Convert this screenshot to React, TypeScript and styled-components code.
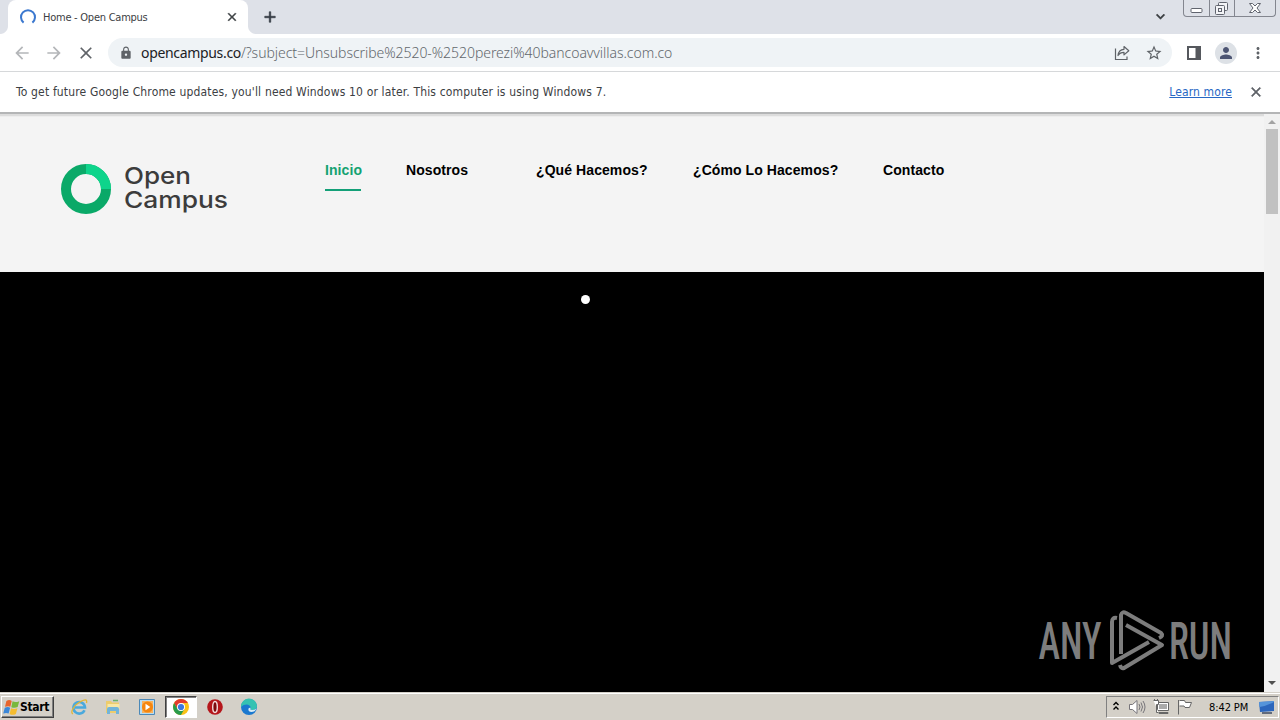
import React from "react";
import styled, { createGlobalStyle, css } from "styled-components";
import {
  MdAdd,
  MdArrowBack,
  MdArrowForward,
  MdClose,
  MdKeyboardArrowDown,
  MdLock,
  MdMoreVert,
  MdPerson,
  MdStarBorder,
} from "react-icons/md";

const GlobalStyle = createGlobalStyle`
  * {
    box-sizing: border-box;
  }
  body {
    margin: 0;
    overflow: hidden;
    font-family: "DejaVu Sans Condensed", "DejaVu Sans", sans-serif;
    font-stretch: condensed;
  }
  svg {
    display: block;
    flex: none;
  }
`;

const Screen = styled.div`
  width: 1280px;
  height: 720px;
  display: flex;
  flex-direction: column;
  background: #fff;
`;

const TabStrip = styled.div`
  height: 34px;
  flex: none;
  display: flex;
  background: #dee1e8;
`;

const TabCorner = styled.div<{ $side: "left" | "right" }>`
  width: 8px;
  background: ${(p) =>
    p.$side === "left"
      ? "radial-gradient(circle at 0 26px, #dee1e8 7.5px, #fff 8.5px) 0 0 no-repeat"
      : "radial-gradient(circle at 8px 26px, #dee1e8 7.5px, #fff 8.5px) 0 0 no-repeat"};
  clip-path: inset(26px 0 0 0);
`;

const Tab = styled.div`
  width: 240px;
  height: 34px;
  display: flex;
  align-items: center;
  padding: 0 9px 0 11px;
  background: #fff;
  border-radius: 8px 8px 0 0;
  color: #3c4043;
`;

const TabTitle = styled.span`
  flex: 1;
  margin-left: 6px;
  font-size: 11px;
  letter-spacing: -0.25px;
  white-space: nowrap;
`;

const NewTab = styled.div`
  margin: 8px 0 0 5px;
  color: #333941;
`;

const TabSearch = styled.div`
  margin: 8px 14px 0 auto;
  color: #3c4043;
`;

// the md icons carry an empty bounding path, keep the stroke off it
const boldIcon = css`
  path:not([fill="none"]) {
    stroke: currentColor;
    stroke-width: 0.8px;
  }
  path[fill="none"] {
    stroke: none;
  }
`;

const BoldClose = styled(MdClose)`
  ${boldIcon}
`;

const BoldAdd = styled(MdAdd)`
  ${boldIcon}
`;

const BoldArrowDown = styled(MdKeyboardArrowDown)`
  ${boldIcon}
`;

const WindowButtons = styled.div`
  display: flex;
  width: 93px;
  height: 17px;
  margin-right: 4px;
  border: 1px solid #83868f;
  border-top: 0;
  border-radius: 0 0 4px 4px;
`;

const WindowButton = styled.div<{ $width: number }>`
  width: ${(p) => p.$width}px;
  display: flex;
  justify-content: center;
  & + & {
    border-left: 1px solid #83868f;
  }
`;

const Toolbar = styled.div`
  height: 38px;
  flex: none;
  display: flex;
  align-items: center;
  padding-left: 12px;
  border-bottom: 1px solid #d6d8da;
  color: #5f6368;
`;

const NavButton = styled.div<{ $disabled?: boolean }>`
  width: 32px;
  color: ${(p) => (p.$disabled ? "#b4b6b9" : "#5f6368")};
`;

const AddressBar = styled.div`
  width: 1064px;
  height: 29px;
  padding: 0 9px 0 11px;
  display: flex;
  align-items: center;
  border-radius: 15px;
  background: #eff3f6;
`;

const Url = styled.div`
  flex: 1;
  margin-left: 8px;
  font-family: "Noto Sans", sans-serif;
  font-weight: 300;
  font-size: 14px;
  letter-spacing: -0.05px;
  white-space: nowrap;
  color: #62676c;
  b {
    font-weight: 400;
    letter-spacing: -0.33px;
    color: #202124;
  }
`;

const StarIcon = styled(MdStarBorder)`
  margin-left: 14px;
`;

const ToolbarActions = styled.div`
  display: flex;
  align-items: center;
  margin-left: 14px;
`;

const Avatar = styled.div`
  width: 22px;
  height: 22px;
  margin: 0 12px 0 13px;
  display: flex;
  align-items: center;
  justify-content: center;
  border-radius: 50%;
  background: #dde1e6;
  color: #4d5573;
`;

const InfoBar = styled.div`
  height: 40px;
  flex: none;
  display: flex;
  align-items: center;
  padding: 0 16px;
  font-size: 12px;
  color: #3c4043;
`;

const InfoText = styled.span`
  flex: 1;
  letter-spacing: 0.163px;
  white-space: nowrap;
`;

const LearnMore = styled.a`
  margin-right: 16px;
  letter-spacing: 0.12px;
  color: #2767c4;
  text-decoration: underline;
`;

const Viewport = styled.div`
  flex: 1;
  min-height: 0;
  display: flex;
  border-top: 2px solid #b4b5b6;
`;

const Page = styled.div`
  flex: 1;
  display: flex;
  flex-direction: column;
`;

const Header = styled.header`
  height: 158px;
  flex: none;
  display: flex;
  background: linear-gradient(#dcdcdc 0 2px, #ededed 2px 3px, #f4f4f4 3px);
`;

const Brand = styled.div`
  width: 325px;
  padding: 48px 0 0 60px;
`;

const Menu = styled.nav`
  display: flex;
  padding-top: 46px;
`;

const MenuItem = styled.a<{ $width: number; $gap?: number; $active?: boolean }>`
  width: ${(p) => p.$width}px;
  height: 31px;
  margin-right: ${(p) => p.$gap ?? 45}px;
  font: bold 14px/20px "Liberation Sans", Arial, sans-serif;
  letter-spacing: 0.08px;
  white-space: nowrap;
  color: #000;
  ${(p) =>
    p.$active &&
    css`
      color: #14a271;
      border-bottom: 2px solid #14a078;
    `}
`;

const Hero = styled.main`
  position: relative;
  flex: 1;
  background: #000;
`;

const LoaderDot = styled.div`
  position: absolute;
  left: 581px;
  top: 23px;
  width: 9px;
  height: 9px;
  border-radius: 50%;
  background: #fff;
`;

const Watermark = styled.div`
  position: absolute;
  right: 26px;
  bottom: 18px;
`;

const Scrollbar = styled.div`
  width: 16px;
  display: flex;
  flex-direction: column;
  align-items: center;
  padding: 5px 0 6px;
  background: #f1f1f1;
`;

const ScrollThumb = styled.div`
  width: 12px;
  height: 85px;
  margin: 5px 0 auto;
  background: #c1c1c1;
`;

const Taskbar = styled.footer`
  height: 28px;
  flex: none;
  display: flex;
  align-items: center;
  padding: 1px 0 0;
  background: #d4d0c8;
  border-top: 1px solid #d4d0c8;
  box-shadow: inset 0 1px #fff;
`;

const StartButton = styled.div`
  width: 53px;
  height: 22px;
  margin: 0 9px 0 1px;
  padding-left: 1px;
  display: flex;
  align-items: center;
  border: 1px solid;
  border-color: #fff #404040 #404040 #fff;
  box-shadow: inset -1px -1px #808080;
  font: bold 12px "DejaVu Sans Condensed", "DejaVu Sans", sans-serif;
  letter-spacing: -0.35px;
  color: #000;
`;

const TaskItem = styled.div<{ $active?: boolean }>`
  width: 32px;
  height: 22px;
  margin-right: 2px;
  display: flex;
  align-items: center;
  justify-content: center;
  border: 1px solid transparent;
  ${(p) =>
    p.$active &&
    css`
      border-color: #404040 #fff #fff #404040;
      background: #fff;
      box-shadow: inset 1px 1px #808080;
    `}
`;

const Tray = styled.div`
  width: 173px;
  height: 22px;
  margin: 0 1px 0 auto;
  padding: 0 2px 0 5px;
  display: flex;
  align-items: center;
  border: 1px solid;
  border-color: #808080 #fff #fff #808080;
`;

const TrayIcons = styled.div`
  display: flex;
  align-items: center;
  gap: 6px;
  margin-left: 8px;
`;

const Clock = styled.span`
  margin: 0 11px 0 15px;
  font-size: 11px;
  letter-spacing: -0.1px;
  white-space: nowrap;
  color: #000;
`;

const Spinner = () => (
  <svg width="18" height="18" viewBox="0 0 18 18" fill="none">
    <path d="M4.6 14.6A7 7 0 1 1 13.4 14.6" stroke="#3b78cf" strokeWidth="2" />
  </svg>
);

const ShareIcon = () => (
  <svg width="18" height="18" viewBox="0 0 18 18" fill="none" stroke="#5f6368" strokeWidth="1.2">
    <path d="M2.500 4.500v11h11.500v-3" />
    <path d="M5 11.500c.4-3.800 2.500-6 6-6.200V2.500l4.800 4.200-4.800 4.200V8.300c-2.800 0-4.700 1-6 3.200z" strokeLinejoin="round" />
  </svg>
);

const SidePanelIcon = () => (
  <svg width="16" height="16" viewBox="0 0 16 16">
    <path fill="#55585d" fillRule="evenodd" d="M1 1h14v14H1zM3 3v10h6.500V3z" />
  </svg>
);

const MinimizeIcon = () => (
  <svg width="14" height="16" viewBox="0 0 14 16">
    <rect x="1" y="8.500" width="11" height="4" rx="1" fill="#fff" stroke="#60646e" />
  </svg>
);

const RestoreIcon = () => (
  <svg width="16" height="16" viewBox="0 0 16 16" fill="#f3f4f7" stroke="#60646e">
    <rect x="4.500" y="2.500" width="9" height="8" rx="1" />
    <rect x="1.500" y="5.500" width="9" height="9" rx="1" />
    <rect x="4.500" y="8.500" width="3" height="3" />
  </svg>
);

const CloseWindowIcon = () => (
  <svg width="14" height="16" viewBox="0 0 14 16">
    <path
      d="M1.500 3.500h3L7 6l2.500-2.500h3L9 8l3.500 4.500h-3L7 10l-2.500 2.500h-3L5 8z"
      fill="#fff"
      stroke="#60646e"
    />
  </svg>
);

const BrandLogo = () => (
  <svg width="170" height="54" viewBox="0 0 170 54">
    <circle cx="26" cy="27" r="20" fill="none" stroke="#0aa968" strokeWidth="10" />
    <path d="M26 7a20 20 0 0 1 20 20" fill="none" stroke="#0ed48b" strokeWidth="10" />
    <g fill="#3c3c3c" fontFamily="Inter, sans-serif" fontWeight="500" fontSize="23.5">
      <text x="64" y="22" textLength="67" lengthAdjust="spacingAndGlyphs">
        Open
      </text>
      <text x="64" y="46" textLength="104" lengthAdjust="spacingAndGlyphs">
        Campus
      </text>
    </g>
  </svg>
);

const AnyRunMark = () => (
  <svg width="200" height="66" viewBox="0 0 200 66">
    <g fill="#7d7d7d" fontFamily="Roboto, sans-serif" fontWeight="500" fontSize="51">
      <text transform="translate(0.5 51) scale(0.643 1)" textLength="98" lengthAdjust="spacingAndGlyphs">
        ANY
      </text>
      <text transform="translate(131 51) scale(0.643 1)" textLength="98" lengthAdjust="spacingAndGlyphs">
        RUN
      </text>
    </g>
    <g fill="none" stroke="#7d7d7d" strokeWidth="4" strokeLinejoin="round">
      <path d="M79 10q-5-1-5 4v41l37-21" />
      <path d="M83 46V7q1-4 5-2l35 20q3 3-2 5" />
      <path d="M88 17l36 20-38 23q-3 1-4-3" />
    </g>
  </svg>
);

const StartIcon = () => (
  <svg width="17" height="17" viewBox="0 0 16 16">
    <path d="M3.200 1.800Q6 .3 8.200 1.800L6.900 7.200Q5 6.200 1.900 7.400z" fill="#e8642c" />
    <path d="M9 2.200Q11.800 3.700 15.300 2L13.800 7.600Q10.800 9 7.800 7.700z" fill="#79b83c" />
    <path d="M1.700 8.200Q4.700 7 6.700 8.200L5.300 13.600Q3 12.500 .2 13.700z" fill="#3b87d8" />
    <path d="M7.600 8.600Q10.300 10 13.600 8.600L12.100 14Q9 15.600 6.200 14z" fill="#f5bc2e" />
  </svg>
);

const IeIcon = () => (
  <svg width="18" height="18" viewBox="0 0 18 18" fill="none">
    <path d="M14.500 12.200A5.800 5.800 0 1 1 15 9.500H5" stroke="#4aa9dd" strokeWidth="2.600" />
    <path d="M3 16C0 15 3 8 9 4.500S17.500 1 16.500 5" stroke="#e3b634" strokeWidth="1.300" />
  </svg>
);

const ExplorerIcon = () => (
  <svg width="18" height="18" viewBox="0 0 18 18">
    <path d="M2 3h5l1 1.500h7V15H2z" fill="#edcc6c" />
    <path d="M3.500 6h12v5h-12z" fill="#f8e7a5" />
    <path d="M3 16v-5q0-2 2-2h8q2 0 2 2v5h-3v-3H6v3z" fill="#72b4d9" />
    <path d="M9 2.500h5" stroke="#6bb36b" strokeWidth="1.500" />
  </svg>
);

const MediaIcon = () => (
  <svg width="18" height="18" viewBox="0 0 18 18">
    <path d="M1.500 1.500h15v15h-15z" fill="#b9dcf1" stroke="#4c89b8" />
    <path d="M4 3h11v12H4z" fill="#f7b25e" />
    <circle cx="9.500" cy="9" r="5.500" fill="#f5860f" />
    <path d="M7.500 5.800v6.400L12.300 9z" fill="#fff" />
  </svg>
);

const ChromeIcon = () => (
  <svg width="18" height="18" viewBox="0 0 18 18">
    <circle cx="9" cy="9" r="8" fill="#fbc116" />
    <path d="M2.100 5A8 8 0 0 1 15.900 5H9L5.500 11z" fill="#e33b2e" />
    <path d="M2.100 5A8 8 0 0 0 8.900 17L12.500 11H5.500z" fill="#299b4b" />
    <circle cx="9" cy="9" r="4" fill="#fff" />
    <circle cx="9" cy="9" r="3.100" fill="#3b78e0" />
  </svg>
);

const OperaIcon = () => (
  <svg width="18" height="18" viewBox="0 0 18 18">
    <circle cx="9" cy="9" r="7.800" fill="#b5161b" />
    <ellipse cx="9" cy="9" rx="2.300" ry="5.500" fill="#7d0a0d" stroke="#f3dede" strokeWidth="1.400" />
  </svg>
);

const EdgeIcon = () => (
  <svg width="18" height="18" viewBox="0 0 18 18">
    <circle cx="9" cy="9" r="8" fill="#1a78cf" />
    <path d="M1 9a8 8 0 0 1 16-1c0 3-2.500 4-5 4-2 0-2-1-1.300-2C11 6.500 5 4.500 1 9z" fill="#35c2b2" />
    <path d="M10.700 10c-.7 1-.7 2 1.300 2 2 0 3.500-.5 4.500-1.500-1 2.500-3 3.500-5 3.500-4 0-4-5-.8-4z" fill="#d9ecf5" />
  </svg>
);

const TrayChevrons = () => (
  <svg width="8" height="12" viewBox="0 0 8 12" fill="none" stroke="#000" strokeWidth="1.400">
    <path d="M1.500 4L4 1.500 6.500 4M1.500 8.500L4 6l2.500 2.500" />
  </svg>
);

const VolumeIcon = () => (
  <svg width="18" height="18" viewBox="0 0 18 18" fill="none" stroke="#77757a">
    <path d="M1.500 6.500h3l4.500-4v13l-4.500-4h-3z" fill="#fff" />
    <path d="M11 6q2 3 0 6M13 4.500q3 4.500 0 9M15 3q4 6 0 12" />
  </svg>
);

const NetworkIcon = () => (
  <svg width="18" height="18" viewBox="0 0 18 18" fill="#fff" stroke="#666">
    <path d="M5.500 4.500h11v8h-11z" />
    <path d="M7 6h8v5H7z" fill="#aaa" stroke="none" />
    <path d="M7 14.500h9v1H7z" />
    <path d="M1.500 2.500h5v4h-2v8h2" />
    <path d="M2.500 1v2M5.500 1v2" />
  </svg>
);

const FlagIcon = () => (
  <svg width="18" height="18" viewBox="0 0 18 18" fill="#fff" stroke="#666">
    <path d="M3.500 2.500h5l1 2h6l-2 5H9l-1-1.500H3.500" />
    <path d="M2.500 2v14.500" />
  </svg>
);

const DesktopIcon = () => (
  <svg width="16" height="16" viewBox="0 0 16 16">
    <path d="M0 3l15-1v10l-14 1z" fill="#2c66bc" />
    <path d="M.5 8q7-1 14.500-5v-1L0 3z" fill="#5594da" />
    <path d="M3 14h10" stroke="#3c4a62" strokeWidth="1.500" />
  </svg>
);

const App = () => {
  return (
    <Screen>
      <GlobalStyle />
      <TabStrip>
        <TabCorner $side="left" />
        <Tab>
          <Spinner />
          <TabTitle>Home - Open Campus</TabTitle>
          <BoldClose size={14} />
        </Tab>
        <TabCorner $side="right" />
        <NewTab>
          <BoldAdd size={18} />
        </NewTab>
        <TabSearch>
          <BoldArrowDown size={17} />
        </TabSearch>
        <WindowButtons>
          <WindowButton $width={25}>
            <MinimizeIcon />
          </WindowButton>
          <WindowButton $width={25}>
            <RestoreIcon />
          </WindowButton>
          <WindowButton $width={41}>
            <CloseWindowIcon />
          </WindowButton>
        </WindowButtons>
      </TabStrip>

      <Toolbar>
        <NavButton $disabled>
          <MdArrowBack size={20} />
        </NavButton>
        <NavButton $disabled>
          <MdArrowForward size={20} />
        </NavButton>
        <NavButton>
          <MdClose size={20} />
        </NavButton>
        <AddressBar>
          <MdLock size={14} />
          <Url>
            <b>opencampus.co</b>/?subject=Unsubscribe%2520-%2520perezi%40bancoavvillas.com.co
          </Url>
          <ShareIcon />
          <StarIcon size={18} />
        </AddressBar>
        <ToolbarActions>
          <SidePanelIcon />
          <Avatar>
            <MdPerson size={18} />
          </Avatar>
          <MdMoreVert size={18} />
        </ToolbarActions>
      </Toolbar>

      <InfoBar>
        <InfoText>
          To get future Google Chrome updates, you'll need Windows 10 or later. This computer is using Windows 7.
        </InfoText>
        <LearnMore>Learn more</LearnMore>
        <BoldClose size={16} color="#5f6368" />
      </InfoBar>

      <Viewport>
        <Page>
          <Header>
            <Brand>
              <BrandLogo />
            </Brand>
            <Menu>
              <MenuItem $width={36} $active>
                Inicio
              </MenuItem>
              <MenuItem $width={62} $gap={68}>
                Nosotros
              </MenuItem>
              <MenuItem $width={112}>¿Qué Hacemos?</MenuItem>
              <MenuItem $width={145}>¿Cómo Lo Hacemos?</MenuItem>
              <MenuItem $width={62}>Contacto</MenuItem>
            </Menu>
          </Header>
          <Hero>
            <LoaderDot />
            <Watermark>
              <AnyRunMark />
            </Watermark>
          </Hero>
        </Page>
        <Scrollbar>
          <svg width="8" height="5" viewBox="0 0 8 5">
            <path d="M0 5l4-4 4 4z" fill="#a3a3a3" />
          </svg>
          <ScrollThumb />
          <svg width="8" height="5" viewBox="0 0 8 5">
            <path d="M0 0l4 4 4-4z" fill="#505050" />
          </svg>
        </Scrollbar>
      </Viewport>

      <Taskbar>
        <StartButton>
          <StartIcon />
          Start
        </StartButton>
        <TaskItem>
          <IeIcon />
        </TaskItem>
        <TaskItem>
          <ExplorerIcon />
        </TaskItem>
        <TaskItem>
          <MediaIcon />
        </TaskItem>
        <TaskItem $active>
          <ChromeIcon />
        </TaskItem>
        <TaskItem>
          <OperaIcon />
        </TaskItem>
        <TaskItem>
          <EdgeIcon />
        </TaskItem>
        <Tray>
          <TrayChevrons />
          <TrayIcons>
            <VolumeIcon />
            <NetworkIcon />
            <FlagIcon />
          </TrayIcons>
          <Clock>8:42 PM</Clock>
          <DesktopIcon />
        </Tray>
      </Taskbar>
    </Screen>
  );
};

export default App;
